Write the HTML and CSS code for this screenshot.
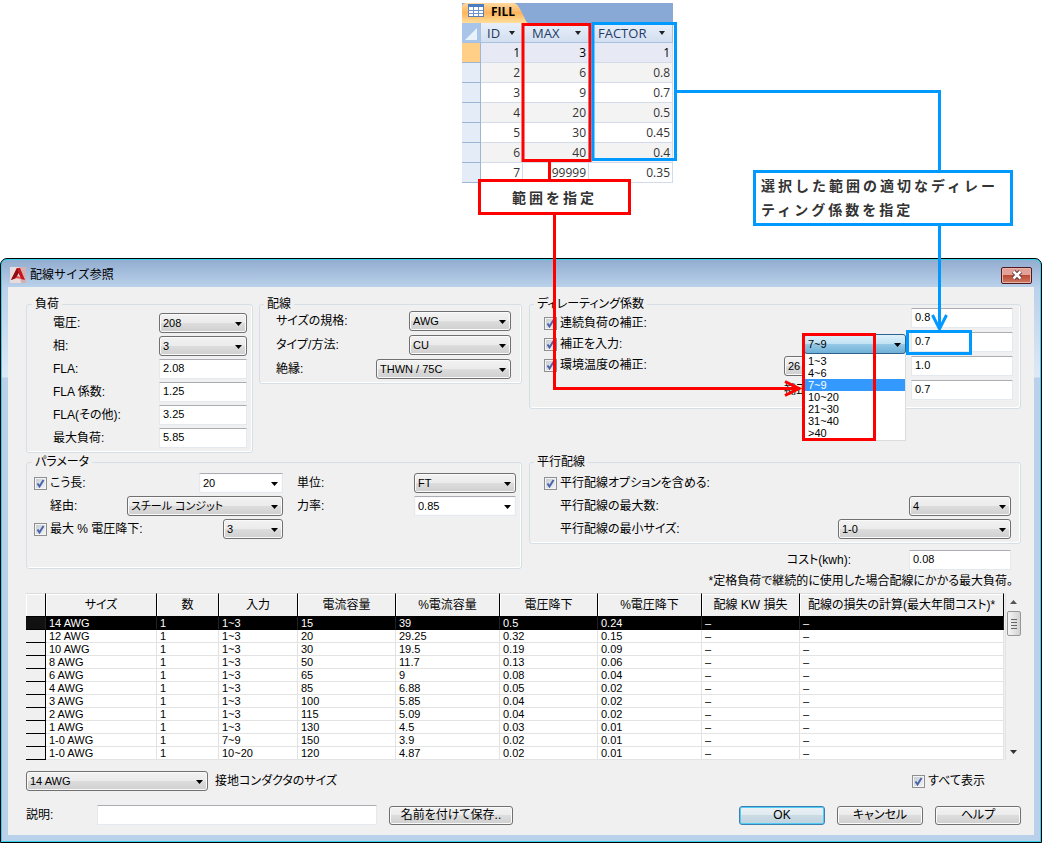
FILE: index.html
```html
<!DOCTYPE html>
<html lang="ja">
<head>
  <meta charset="UTF-8" />
  <title>配線サイズ参照</title>
  <link rel="stylesheet" href="styles.css">
</head>
<body>

<div class="page">

  <div class="top">
    <div class="sheet">
      <div class="sheet-tabs">
        <svg class="tab-shape" width="66" height="20" viewBox="0 0 66 20">
          <defs>
            <linearGradient id="tabFill" x1="0" y1="0" x2="0" y2="1">
              <stop offset="0" stop-color="#ffd9a0" />
              <stop offset="0.5" stop-color="#ffb45c" />
              <stop offset="1" stop-color="#ffdf9c" />
            </linearGradient>
          </defs>
          <path d="M0 20V3Q1 0 4 0H52Q56 1 59 8L63 16Q64 19 66 20Z" fill="url(#tabFill)" />
          <rect x="6.500" y="1.500" width="15" height="12" fill="#fff" stroke="#5b7fb5" />
          <rect x="6" y="1" width="16" height="3" fill="#4a7cc4" />
          <path d="M6 7.500H21M6 10.500H21M11.500 4V13M16.500 4V13" stroke="#6f94cc" />
        </svg>
        <span class="tab-name">FILL</span>
      </div>
      <table class="sheet-table">
        <colgroup><col class="s-sel"><col class="s-id"><col class="s-max"><col></colgroup>
        <thead>
          <tr>
            <th class="corner"><svg width="12" height="12" viewBox="0 0 12 12"><path d="M12 0V12H0Z" fill="#e9f1fb" /></svg></th>
            <th class="id">ID</th><th>MAX</th><th>FACTOR</th>
          </tr>
        </thead>
        <tbody>
          <tr class="current"><th></th><td>1</td><td>3</td><td>1</td></tr>
          <tr><th></th><td>2</td><td>6</td><td>0.8</td></tr>
          <tr><th></th><td>3</td><td>9</td><td>0.7</td></tr>
          <tr><th></th><td>4</td><td>20</td><td>0.5</td></tr>
          <tr><th></th><td>5</td><td>30</td><td>0.45</td></tr>
          <tr><th></th><td>6</td><td>40</td><td>0.4</td></tr>
          <tr><th></th><td>7</td><td>99999</td><td>0.35</td></tr>
        </tbody>
      </table>
    </div>
  </div>

  <div class="window">
    <div class="titlebar">
      <svg width="16" height="16" viewBox="0 0 16 16">
        <rect width="16" height="16" fill="#e9dcdc" />
        <path d="M9 0H16V16H11Z" fill="#d5b0b0" />
        <path d="M7 1H10L15 13L11 12L8.500 6L6 11L1 13Z" fill="#c5161d" />
        <path d="M7 1L8.500 6L6 11L1 13Z" fill="#8c0d12" />
        <path d="M5 11L8 9L12 12Z" fill="#e8434a" />
      </svg>
      <span class="title">配線サイズ参照</span>
      <button class="close" type="button" aria-label="閉じる">
        <svg width="12" height="10" viewBox="0 0 12 10">
          <path d="M2.500 1.500L9.500 8.500M9.500 1.500L2.500 8.500" stroke="#5b3a40" stroke-width="4.500" />
          <path d="M2.500 1.500L9.500 8.500M9.500 1.500L2.500 8.500" stroke="#fff" stroke-width="2.500" />
        </svg>
      </button>
    </div>

    <div class="client">
      <div class="groups">
        <div class="pair">
          <fieldset class="load">
            <legend>負荷</legend>
            <div class="row"><label for="volt">電圧:</label><select id="volt"><option>208</option></select></div>
            <div class="row"><label for="phase">相:</label><select id="phase"><option>3</option></select></div>
            <div class="row"><label for="fla">FLA:</label><input id="fla" type="text" value="2.08"></div>
            <div class="row"><label for="flaf">FLA 係数:</label><input id="flaf" type="text" value="1.25"></div>
            <div class="row"><label for="flao">FLA(その他):</label><input id="flao" type="text" value="3.25"></div>
            <div class="row"><label for="maxload">最大負荷:</label><input id="maxload" type="text" value="5.85"></div>
          </fieldset>
          <fieldset class="wire">
            <legend>配線</legend>
            <div class="row"><label for="std">サイズの規格:</label><select id="std" class="w-m"><option>AWG</option></select></div>
            <div class="row"><label for="type">タイプ/方法:</label><select id="type" class="w-m"><option>CU</option></select></div>
            <div class="row"><label for="insul">絶縁:</label><select id="insul" class="w-insul"><option>THWN / 75C</option></select></div>
          </fieldset>
        </div>

        <fieldset class="derating">
          <legend>ディレーティング係数</legend>
          <div class="checks">
            <label class="check"><input type="checkbox" checked>連続負荷の補正:</label>
            <label class="check"><input type="checkbox" checked>補正を入力:</label>
            <label class="check"><input type="checkbox" checked>環境温度の補正:</label>
          </div>
          <div class="factors">
            <div class="row"><input type="text" class="w-m" aria-label="連続負荷の係数" value="0.8"></div>
            <div class="row">
              <div class="dropdown">
                <select class="open w-m" aria-label="補正を入力"><option>7~9</option></select>
                <ul class="list">
                  <li>1~3</li>
                  <li>4~6</li>
                  <li class="selected">7~9</li>
                  <li>10~20</li>
                  <li>21~30</li>
                  <li>31~40</li>
                  <li>&gt;40</li>
                </ul>
              </div>
              <input type="text" class="w-m" aria-label="入力の係数" value="0.7">
            </div>
            <div class="row">
              <select class="w-temp" aria-label="環境温度"><option>26</option></select>
              <input type="text" class="w-m" aria-label="環境温度の係数" value="1.0">
            </div>
            <div class="row">
              <label class="w-temp" for="total">補正</label>
              <input id="total" type="text" class="w-m" value="0.7">
            </div>
          </div>
        </fieldset>

        <fieldset class="params">
          <legend>パラメータ</legend>
          <div class="params-main">
            <div class="row"><label class="check"><input type="checkbox" checked>こう長:</label><select class="edit w-s" aria-label="こう長"><option>20</option></select></div>
            <div class="row"><label class="indent" for="via">経由:</label><select id="via"><option>スチール コンジット</option></select></div>
            <div class="row"><label class="check"><input type="checkbox" checked>最大 % 電圧降下:</label><select class="w-xs" aria-label="最大 % 電圧降下"><option>3</option></select></div>
          </div>
          <div class="params-side">
            <div class="row"><label for="unit">単位:</label><select id="unit" class="w-m"><option>FT</option></select></div>
            <div class="row"><label for="pf">力率:</label><select id="pf" class="edit w-m"><option>0.85</option></select></div>
          </div>
        </fieldset>

        <div class="right-col">
          <fieldset class="parallel">
            <legend>平行配線</legend>
            <div class="row"><label class="check"><input type="checkbox" checked>平行配線オプションを含める:</label></div>
            <div class="row"><label class="indent" for="pmax">平行配線の最大数:</label><select id="pmax" class="w-m"><option>4</option></select></div>
            <div class="row"><label class="indent" for="pmin">平行配線の最小サイズ:</label><select id="pmin" class="w-min"><option>1-0</option></select></div>
          </fieldset>
          <div class="cost"><label for="cost">コスト(kwh):</label><input id="cost" type="text" class="w-m" value="0.08"></div>
          <p class="note">*定格負荷で継続的に使用した場合配線にかかる最大負荷。</p>
        </div>
      </div>

      <div class="grid-box">
        <table class="grid">
          <colgroup>
            <col class="g-sel"><col class="g-size"><col class="g-num"><col class="g-in"><col class="g-a"><col class="g-b"><col class="g-a"><col class="g-b"><col class="g-a"><col>
          </colgroup>
          <thead>
            <tr><th></th><th>サイズ</th><th>数</th><th>入力</th><th>電流容量</th><th>%電流容量</th><th>電圧降下</th><th>%電圧降下</th><th>配線 KW 損失</th><th>配線の損失の計算(最大年間コスト)*</th></tr>
          </thead>
          <tbody>
            <tr class="selected"><th></th><td>14 AWG</td><td>1</td><td>1~3</td><td>15</td><td>39</td><td>0.5</td><td>0.24</td><td>–</td><td>–</td></tr>
            <tr><th></th><td>12 AWG</td><td>1</td><td>1~3</td><td>20</td><td>29.25</td><td>0.32</td><td>0.15</td><td>–</td><td>–</td></tr>
            <tr><th></th><td>10 AWG</td><td>1</td><td>1~3</td><td>30</td><td>19.5</td><td>0.19</td><td>0.09</td><td>–</td><td>–</td></tr>
            <tr><th></th><td>8 AWG</td><td>1</td><td>1~3</td><td>50</td><td>11.7</td><td>0.13</td><td>0.06</td><td>–</td><td>–</td></tr>
            <tr><th></th><td>6 AWG</td><td>1</td><td>1~3</td><td>65</td><td>9</td><td>0.08</td><td>0.04</td><td>–</td><td>–</td></tr>
            <tr><th></th><td>4 AWG</td><td>1</td><td>1~3</td><td>85</td><td>6.88</td><td>0.05</td><td>0.02</td><td>–</td><td>–</td></tr>
            <tr><th></th><td>3 AWG</td><td>1</td><td>1~3</td><td>100</td><td>5.85</td><td>0.04</td><td>0.02</td><td>–</td><td>–</td></tr>
            <tr><th></th><td>2 AWG</td><td>1</td><td>1~3</td><td>115</td><td>5.09</td><td>0.04</td><td>0.02</td><td>–</td><td>–</td></tr>
            <tr><th></th><td>1 AWG</td><td>1</td><td>1~3</td><td>130</td><td>4.5</td><td>0.03</td><td>0.01</td><td>–</td><td>–</td></tr>
            <tr><th></th><td>1-0 AWG</td><td>1</td><td>7~9</td><td>150</td><td>3.9</td><td>0.02</td><td>0.01</td><td>–</td><td>–</td></tr>
            <tr><th></th><td>1-0 AWG</td><td>1</td><td>10~20</td><td>120</td><td>4.87</td><td>0.02</td><td>0.01</td><td>–</td><td>–</td></tr>
          </tbody>
        </table>
        <div class="scrollbar">
          <svg width="7" height="4" viewBox="0 0 7 4"><path d="M0 4L3.500 0L7 4Z" fill="#555" /></svg>
          <div class="thumb"></div>
          <svg width="7" height="4" viewBox="0 0 7 4"><path d="M0 0L3.500 4L7 0Z" fill="#333" /></svg>
        </div>
      </div>

      <div class="ground">
        <select id="ground"><option>14 AWG</option></select>
        <label for="ground">接地コンダクタのサイズ</label>
        <label class="check show-all"><input type="checkbox" checked>すべて表示</label>
      </div>

      <div class="actions">
        <label for="desc">説明:</label>
        <input id="desc" type="text">
        <button class="btn save" type="button">名前を付けて保存..</button>
        <button class="btn ok" type="button">OK</button>
        <button class="btn" type="button">キャンセル</button>
        <button class="btn" type="button">ヘルプ</button>
      </div>
    </div>
  </div>

  <!-- callout lines and frames -->
  <svg class="lines" width="1042" height="460" viewBox="0 0 1042 460">
    <g fill="none" stroke="#f00" stroke-width="3">
      <rect x="523" y="24.500" width="67" height="136" />
      <path d="M549.500 161V181" />
      <path d="M554.500 213V388.500H800" />
      <path d="M785 381.500L799 388.500L785 395.500" />
      <rect x="803.500" y="334.500" width="71" height="105" />
    </g>
    <g fill="none" stroke="#09f" stroke-width="3">
      <rect x="593" y="23.500" width="82.500" height="136" />
      <path d="M676 91.500H939.500V172" />
      <path d="M939.500 225V329" />
      <path d="M932.500 315L939.500 329L946.500 315" />
      <rect x="907.500" y="331.500" width="63" height="22" />
    </g>
  </svg>
  <div class="callout red">範囲を指定</div>
  <div class="callout blue">選択した範囲の適切なディレーティング係数を指定</div>

</div>

</body>
</html>
```
FILE: styles.css
```css
* {
  box-sizing: border-box;
}

body {
  margin: 0;
  background: #fff;
  color: #000;
  font-family: "Liberation Sans", "Noto Sans CJK JP", sans-serif;
  font-size: 12px;
  line-height: 14px;
  font-feature-settings: "palt";
}

.page {
  position: relative;
}

/* datasheet */

.top {
  display: flex;
  height: 258px;
  padding: 3px 0 0 462px;
}

.sheet {
  width: 211px;
  font-family: "Open Sans", "Noto Sans", sans-serif;
}

.sheet-tabs {
  position: relative;
  height: 20px;
  background: #88a9d6;
}

.tab-shape {
  display: block;
}

.tab-name {
  position: absolute;
  left: 29px;
  top: 2px;
  font-weight: bold;
}

.sheet-table {
  width: 100%;
  table-layout: fixed;
  border-collapse: separate;
  border-spacing: 0;
}

.s-sel { width: 19px; }
.s-id { width: 42px; }
.s-max { width: 66px; }

.sheet-table th,
.sheet-table td {
  height: 20px;
  padding: 1px 2px 0 0;
  line-height: 18px;
  border-right: 1px solid #d4dbe8;
  border-bottom: 1px solid #d4dbe8;
  text-align: right;
  font-weight: normal;
  color: #333;
}

.sheet-table thead th {
  padding: 0 0 0 9px;
  text-align: left;
  font-size: 13px;
  color: #1f3b66;
  border-color: #a9c0de;
  background: url("data:image/svg+xml,%3Csvg xmlns='http://www.w3.org/2000/svg' width='6' height='4'%3E%3Cpath d='M0 0H6L3 4Z' fill='%23222'/%3E%3C/svg%3E") no-repeat right 7px center, linear-gradient(#e8effa, #d3dff0);
}

.sheet-table thead .id {
  padding-left: 6px;
}

.sheet-table thead .corner {
  padding: 3px 0 0 3px;
  line-height: 12px;
  background: #a9c4e9;
}

.sheet-table tbody th {
  background: #e3ecf7;
  border-color: #9eb6d3;
}

.sheet-table tbody tr:nth-child(even) td {
  background: #f3f3f3;
}

.sheet-table .current td {
  background: #e7eaf5;
  color: #000;
}

.sheet-table .current th {
  background: #ffcf87;
}

/* window */

.window {
  border: 1px solid #000;
  border-radius: 7px 7px 0 0;
  padding: 1px;
  background: #35d2ee;
}

.titlebar {
  display: flex;
  align-items: center;
  gap: 4px;
  height: 27px;
  padding: 3px 8px 0 8px;
  border-radius: 5px 5px 0 0;
  background: linear-gradient(#93add0, #b9d1ea);
}

.title {
  flex: 1;
  font-feature-settings: normal;
}

.close {
  display: flex;
  align-items: center;
  justify-content: center;
  width: 31px;
  height: 17px;
  padding: 0;
  border: 1px solid #501a20;
  border-radius: 2px;
  background: linear-gradient(#e3a197 45%, #bd4a35 50%, #cf7a62);
  box-shadow: inset 0 0 0 1px #e5b5ac;
}

.client {
  border: solid transparent;
  border-width: 0 6px 6px;
  padding: 11px 13px 10px 18px;
  background: linear-gradient(#f0f0f0, #f0f0f0) padding-box, linear-gradient(#b9d1ea, #dce9f7 90px, #b9d1ea 91px) border-box;
}

.groups {
  display: grid;
  grid-template-columns: 496fr 492fr;
  align-items: start;
  gap: 3px 7px;
}

.pair {
  display: flex;
  align-items: flex-start;
  gap: 6px;
}

fieldset {
  min-width: 0;
  margin: 0;
  padding: 0 5px 4px 7px;
  border: 1px solid #d5dfe5;
  border-radius: 3px;
  box-shadow: inset -1px -1px 0 #fff;
}

legend {
  padding: 0 3px;
  margin-left: -2px;
  line-height: 12px;
}

.row {
  display: flex;
  align-items: center;
  justify-content: space-between;
  height: 20px;
}

.row + .row {
  margin-top: 3px;
}

.load {
  width: 227px;
  padding-top: 3px;
}

.load .row {
  padding-left: 19px;
}

.load select,
.load input {
  width: 88px;
}

.wire {
  flex: 1;
  padding: 1px 10px 4px 6px;
}

.wire .row {
  padding-left: 10px;
}

.wire .row + .row,
.factors .row + .row {
  margin-top: 4px;
}

.derating {
  padding: 0 7px 8px 6px;
}

/* the checks and the value column keep their own row pitch */
.derating .checks {
  float: left;
  display: flex;
  flex-direction: column;
  gap: 7px;
  padding: 6px 0 0 8px;
}

.factors .row {
  justify-content: flex-end;
  gap: 5px;
}

.factors {
  margin-top: -2px;
}

.check {
  display: flex;
  align-items: center;
  gap: 3px;
}

.params {
  display: flex;
  gap: 14px;
  min-height: 113px;
  padding-top: 5px;
}

.params-main {
  flex: 249;
}

.params-side {
  flex: 219;
}

.indent {
  padding-left: 16px;
}

.parallel {
  padding: 5px 9px 4px 6px;
}

.parallel .row {
  padding-left: 8px;
}

.cost {
  display: flex;
  align-items: center;
  justify-content: flex-end;
  gap: 58px;
  padding: 6px 10px 0 0;
}

.note {
  margin: 4px 8px 0 0;
  text-align: right;
}

/* controls */

input[type="text"],
select {
  height: 20px;
  margin: 0;
  padding: 0 3px;
  border: 1px solid #e3e9ef;
  border-top-color: #abadb3;
  border-radius: 1px;
  background-color: #fff;
  color: #000;
  font-family: "Liberation Sans", "Noto Sans CJK JP", sans-serif;
  font-size: 11px;
  line-height: 14px;
  font-feature-settings: "palt";
}

input[type="text"] {
  padding-bottom: 2px;
}

select {
  appearance: none;
  border: 1px solid #707070;
  border-radius: 3px;
  background: url("data:image/svg+xml,%3Csvg xmlns='http://www.w3.org/2000/svg' width='7' height='4'%3E%3Cpath d='M0 0H7L3.500 4Z'/%3E%3C/svg%3E") no-repeat right 4px top 8px, linear-gradient(#f2f2f2, #ebebeb 50%, #dddddd 50%, #cfcfcf);
  box-shadow: inset 0 0 0 1px #fafafa;
}

select.edit {
  border-color: #abadb3 #e3e9ef #e3e9ef;
  border-radius: 1px;
  background: #fff url("data:image/svg+xml,%3Csvg xmlns='http://www.w3.org/2000/svg' width='7' height='4'%3E%3Cpath d='M0 0H7L3.500 4Z'/%3E%3C/svg%3E") no-repeat right 4px top 8px;
}

select.open {
  border-color: #2c628b;
  background: url("data:image/svg+xml,%3Csvg xmlns='http://www.w3.org/2000/svg' width='7' height='4'%3E%3Cpath d='M0 0H7L3.500 4Z'/%3E%3C/svg%3E") no-repeat right 4px top 8px, linear-gradient(#e0f1fa, #bfe1f3 50%, #96c9e6 50%, #6fb0d6);
  box-shadow: none;
}

.w-xs { width: 60px; }
.w-s { width: 84px; }
.w-m { width: 102px; }
.w-temp { width: 122px; }
.w-insul { width: 135px; }
.w-min { width: 173px; }

#via {
  width: 156px;
}

input[type="checkbox"] {
  appearance: none;
  flex: none;
  width: 13px;
  height: 13px;
  margin: 0;
  border: 1px solid #8e8f8f;
  background: url("data:image/svg+xml,%3Csvg xmlns='http://www.w3.org/2000/svg' width='11' height='11'%3E%3Cpath d='M2.500 5.500L4.500 8.500L8.500 2' fill='none' stroke='%234b63a8' stroke-width='2'/%3E%3C/svg%3E"), linear-gradient(135deg, #c3c9d2, #f5f6f8);
  box-shadow: inset 0 0 0 1px #f4f4f4;
}

.dropdown {
  position: relative;
  display: flex;
  align-self: flex-end;
  margin-bottom: -2px;
}

.list {
  position: absolute;
  top: 20px;
  left: 0;
  right: 0;
  z-index: 1;
  margin: 0;
  padding: 1px 0;
  list-style: none;
  background: #fff;
  border: 1px solid #dcdcdc;
  border-top: 0;
  font-size: 11px;
  line-height: 12px;
}

.list li {
  padding-left: 3px;
}

.list .selected {
  background: #39f;
  color: #fff;
}

/* result grid */

.grid-box {
  display: flex;
  margin-top: 5px;
}

.grid {
  flex: 1;
  width: 100%;
  table-layout: fixed;
  border-collapse: separate;
  border-spacing: 0;
  background: #fff;
}

.g-sel { width: 20px; }
.g-size { width: 111px; }
.g-num { width: 62px; }
.g-in { width: 79px; }
.g-a { width: 98px; }
.g-b { width: 104px; }

.grid th {
  padding: 0;
  background: #f0f0f0;
  border-right: 1px solid #000;
  border-bottom: 1px solid #000;
  font-weight: normal;
}

.grid thead th {
  height: 24px;
  border-top: 1px solid #dcdcdc;
  box-shadow: inset 1px 1px 0 #fff;
}

.grid td {
  height: 13px;
  padding: 0 0 0 3px;
  border-right: 1px solid #e3e3e3;
  border-bottom: 1px solid #e3e3e3;
  font-size: 11px;
  line-height: 12px;
}

.grid .selected td,
.grid .selected th {
  background: #000;
  border-bottom-color: #000;
  border-right-color: #222;
  color: #fff;
}

.grid .selected th {
  background: #111;
}

.scrollbar {
  display: flex;
  flex-direction: column;
  align-items: center;
  width: 16px;
  margin-left: 1px;
  padding: 7px 0 6px;
  background: #f0f0f0;
  border-left: 1px solid #e3e3e3;
}

.thumb {
  width: 14px;
  height: 25px;
  margin: 7px 0 auto;
  border: 1px solid #979797;
  border-radius: 2px;
  background: repeating-linear-gradient(#666 0 1px, transparent 1px 3px) no-repeat center / 6px 10px, linear-gradient(90deg, #f5f5f5, #d2d2d2);
}

/* bottom rows */

.ground {
  display: flex;
  align-items: center;
  gap: 7px;
  padding: 11px 36px 0 0;
}

#ground {
  width: 182px;
}

.show-all {
  margin-left: auto;
}

.actions {
  display: flex;
  align-items: center;
  gap: 12px;
  margin-top: 14px;
}

.actions label {
  width: 59px;
}

#desc {
  width: 280px;
}

.btn {
  width: 86px;
  height: 19px;
  padding: 0;
  border: 1px solid #707070;
  border-radius: 3px;
  background: linear-gradient(#f2f2f2, #ebebeb 50%, #dddddd 50%, #cfcfcf);
  box-shadow: inset 0 0 0 1px #fafafa;
  color: #000;
  font: inherit;
  font-feature-settings: "palt";
}

.save {
  width: 124px;
  margin-right: auto;
}

.ok {
  border-color: #3c7fb1;
  background: linear-gradient(#eaf2f6, #dfe9ee 50%, #cbdbe4 50%, #bfd3de);
  box-shadow: inset 0 0 0 1px #4fcdf5;
}

/* callouts lie over the sheet and the window */

.lines {
  position: absolute;
  left: 0;
  top: 0;
  z-index: 2;
  pointer-events: none;
}

.callout {
  position: absolute;
  z-index: 3;
  background: #fff;
  border: 3px solid #f00;
  color: #333;
  font-size: 14px;
  font-weight: bold;
  font-feature-settings: normal;
  letter-spacing: 3px;
}

.callout.red {
  left: 478px;
  top: 179px;
  width: 153px;
  height: 36px;
  line-height: 32px;
  text-align: center;
}

.callout.blue {
  left: 753px;
  top: 170px;
  width: 260px;
  padding: 1px 0 1px 5px;
  border-color: #09f;
  line-height: 24px;
}
```
